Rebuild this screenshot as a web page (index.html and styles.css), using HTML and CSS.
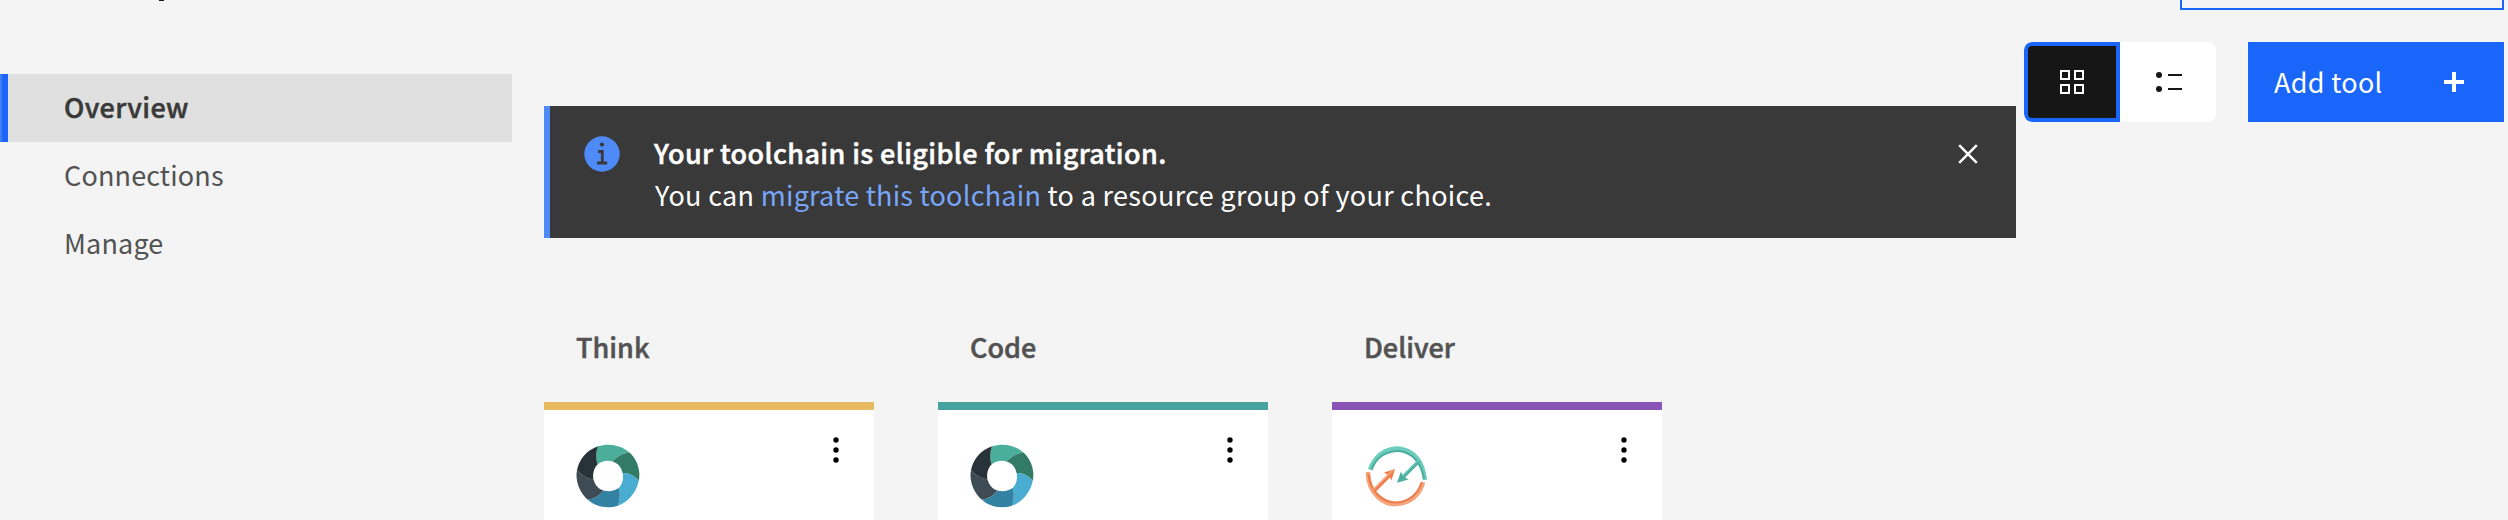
FILE: index.html
```html
<!DOCTYPE html>
<html lang="en">
<head>
<meta charset="utf-8">
<title>Toolchain overview</title>
<link rel="stylesheet" href="styles.css">
</head>
<body>
<svg class="defs" width="0" height="0" aria-hidden="true">
  <symbol id="ring" viewBox="0 0 64 64">
    <path fill="#4aae9b" d="M22 2.300C33 -1.300 45 1 53.500 8.500C47 9 41 12.500 36.500 17.500C31 16 26 17 21.500 20.500C19.500 14 20 8 22 2.300Z"/>
    <path fill="#347b67" d="M53.500 8.500C61.500 16 65 27 62.700 37C58.500 31.500 53 29 46.600 29C45.500 23.500 42 19 36.500 17.500C41 12.500 47 9 53.500 8.500Z"/>
    <path fill="#4aacd0" d="M62.700 37C60.500 48 52.500 58 42 61.700C44 55 44.500 50 42.800 44C46.500 40 47.800 34.500 46.600 29C53 29 58.500 31.500 62.700 37Z"/>
    <path fill="#3482a3" d="M42 61.700C31 65 20 63 11.500 55.500C17.500 55 23 52 27.300 46.500C33 48 38.500 47 42.800 44C44.500 50 44 55 42 61.700Z"/>
    <path fill="#3d4c54" d="M11.500 55.500C3 48 -1 36 1 26.200C5.500 31.500 11 34.500 17.500 35.500C19 41 22.500 45 27.300 46.500C23 52 17.500 55 11.500 55.500Z"/>
    <path fill="#273338" d="M1 26.200C3 15.500 11 6 22 2.300C20 8 19.500 14 21.500 20.500C17.700 24.500 16.500 30 17.500 35.500C11 34.500 5.500 31.500 1 26.200Z"/>
  </symbol>
  <symbol id="dots" viewBox="0 0 8 28">
    <circle cx="4" cy="4" r="2.700"/><circle cx="4" cy="14" r="2.700"/><circle cx="4" cy="24" r="2.700"/>
  </symbol>
</svg>
<div class="page">
  <aside class="side">
    <div class="title"><div class="tail"></div></div>
    <nav class="nav">
      <a class="item active"><span>Overview</span></a>
      <a class="item"><span>Connections</span></a>
      <a class="item"><span>Manage</span></a>
    </nav>
  </aside>
  <main class="main">
    <section class="banner">
      <svg class="info" viewBox="0 0 36 36"><circle cx="18" cy="18" r="17.700" fill="#4f8af9"/><circle cx="18" cy="8.600" r="2.100" fill="#393939"/><path d="M14.200 15.500H18.300V27M13 27H23.200" fill="none" stroke="#393939" stroke-width="2.800"/></svg>
      <div class="message">
        <div class="strong">Your toolchain is eligible for migration.</div>
        <div class="body">You can <a class="link">migrate this toolchain</a> to a resource group of your choice.</div>
      </div>
      <svg class="close" viewBox="0 0 20 20"><path d="M1.200 1.200L18.800 18.800M18.800 1.200L1.200 18.800" fill="none" stroke="#fff" stroke-width="2.400"/></svg>
    </section>
    <section class="columns">
      <div class="column">
        <h2>Think</h2>
        <div class="card think"><svg class="logo"><use href="#ring"/></svg><svg class="more"><use href="#dots"/></svg></div>
      </div>
      <div class="column">
        <h2>Code</h2>
        <div class="card code"><svg class="logo"><use href="#ring"/></svg><svg class="more"><use href="#dots"/></svg></div>
      </div>
      <div class="column">
        <h2>Deliver</h2>
        <div class="card deliver">
          <svg class="logo" viewBox="-2 0 64 64" fill="none">
            <path d="M4 25.500C12 2 38 -2 51.500 14.500C56 20.500 58 27 59 36" stroke="#6ccdbd" stroke-width="4.200"/>
            <path d="M5.500 26C13 5 37 1.500 50 16C54.500 21.500 57 28 58 35" stroke="#4cae9e" stroke-width="2"/>
            <path d="M53 17L37 33" stroke="#4cae9e" stroke-width="3.600"/>
            <path d="M31 38.700L35 27.500L37 32L42.500 35.500Z" fill="#4cae9e"/><path d="M52.500 16L36.500 32" stroke="#6ccdbd" stroke-width="1.300"/>
            <path d="M2 28C2 51 19 61 31 60C44 59 54 51 57 38" stroke="#f4a57c" stroke-width="4.600"/>
            <path d="M2.500 30C4 49 19 59 31 58.500C43 57.500 52 50 55.500 39" stroke="#ef7d4b" stroke-width="2.200"/>
            <path d="M8 47L25 30" stroke="#ef7d4b" stroke-width="3.600"/>
            <path d="M29 25L25.500 36.500L23.500 32L18 28.500Z" fill="#ef7d4b"/><path d="M7 46L27 26" stroke="#f4a57c" stroke-width="1.600"/>
          </svg>
          <svg class="more"><use href="#dots"/></svg>
        </div>
      </div>
    </section>
  </main>
  <div class="actions">
    <div class="outline"></div>
    <div class="bar">
      <div class="switch">
        <div class="mode selected"><svg width="24" height="24" viewBox="0 0 24 24" fill="none" stroke="#fff" stroke-width="2"><rect x="1" y="1" width="8" height="8"/><rect x="15" y="1" width="8" height="8"/><rect x="1" y="15" width="8" height="8"/><rect x="15" y="15" width="8" height="8"/></svg></div>
        <div class="mode"><svg width="28" height="24" viewBox="0 0 28 24" fill="#161616"><circle cx="5" cy="5" r="3"/><circle cx="5" cy="19" r="3"/><rect x="14" y="4" width="14" height="2"/><rect x="14" y="18" width="14" height="2"/></svg></div>
      </div>
      <div class="add"><span>Add tool</span><svg width="20" height="20" viewBox="0 0 20 20"><path d="M10 0V20M0 10H20" stroke="#fff" stroke-width="4"/></svg></div>
    </div>
  </div>
</div>
</body>
</html>
```
FILE: styles.css
```css
* { box-sizing: border-box; }
body { margin: 0; background: #f4f4f4; font-family: "Noto Sans CJK SC", "Open Sans", sans-serif; font-size: 27px; color: #525252; }
svg { display: block; flex: none; }
.defs { position: absolute; }
.page { display: flex; width: 2508px; height: 520px; overflow: hidden; }
.side { width: 512px; margin-right: 32px; flex: none; }
.title { height: 74px; padding-left: 159px; }
.tail { width: 5px; height: 1px; background: #161616; }
.item { display: flex; align-items: center; height: 68px; padding: 0 0 3px 64px; letter-spacing: 0.15px; }
.active { background: linear-gradient(90deg, #3f7ff5 2px, #1a65fa 2px, #1a65fa 8px, #e0e0e0 8px); color: #393939; font-weight: 500; letter-spacing: 0.35px; -webkit-text-stroke: 0.5px; }
.main { width: 1472px; flex: none; padding-top: 106px; }
.banner { display: flex; height: 132px; background: #393939; border-left: 6px solid #4f8af9; padding-left: 34px; color: #fff; }
.info { width: 36px; height: 36px; margin: 30px 34px 0 0; }
.message { flex: 1; padding-top: 26px; line-height: 42px; }
.strong { font-weight: 500; letter-spacing: 0.38px; -webkit-text-stroke: 0.5px; }
.body { letter-spacing: 0.33px; padding-left: 1px; }
.link { color: #78a6f9; letter-spacing: 0.24px; }
.close { width: 20px; height: 20px; margin: 38px 38px 0 0; }
.columns { display: flex; gap: 64px; padding-top: 88px; }
.column { width: 330px; }
h2 { margin: 0; padding-left: 32px; height: 76px; font-size: 27px; line-height: 42px; font-weight: 500; -webkit-text-stroke: 0.5px; }
.card { display: flex; justify-content: space-between; height: 118px; background: #fff; border-top: 8px solid; padding: 34px 34px 0 32px; }
.think { border-color: #eaba61; }
.code { border-color: #46a29f; }
.deliver { border-color: #8854b5; }
.logo { width: 64px; height: 64px; }
.more { width: 8px; height: 28px; margin-top: -8px; }
.actions { width: 484px; margin-left: 8px; flex: none; }
.outline { height: 10px; width: 324px; margin-left: 156px; border: 2px solid #1a65fa; border-top: 0; }
.bar { display: flex; gap: 32px; padding-top: 32px; }
.switch { display: flex; width: 192px; height: 80px; background: #fff; border-radius: 8px; overflow: hidden; }
.mode { display: flex; align-items: center; justify-content: center; width: 96px; }
.selected { background: #161616; border: 4px solid #1a65fa; border-radius: 8px 0 0 8px; }
.add { display: flex; align-items: center; justify-content: space-between; width: 256px; height: 80px; padding: 0 40px 0 26px; background: #1a65fa; color: #fff; letter-spacing: 0.3px; }
.add span { padding-bottom: 2px; }
```
